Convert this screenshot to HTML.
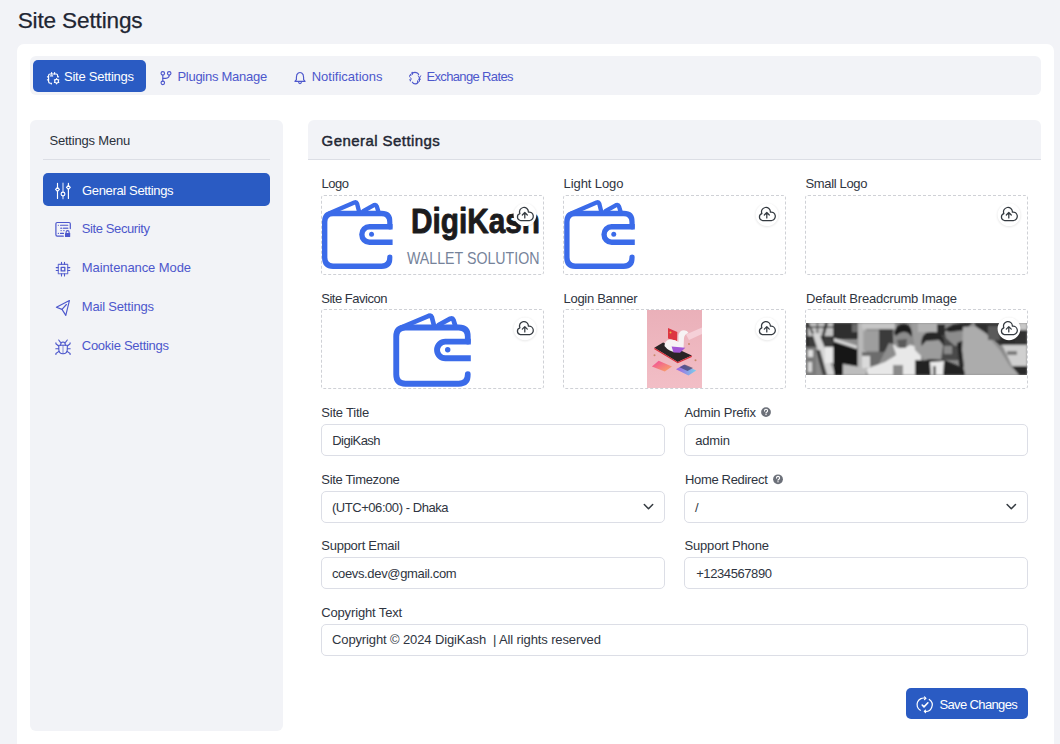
<!DOCTYPE html><html><head><meta charset="utf-8"><title>Site Settings</title><style>
*{margin:0;padding:0;box-sizing:border-box}
html,body{width:1060px;height:744px;overflow:hidden;background:#f2f3f7;font-family:"Liberation Sans",sans-serif}
.a{position:absolute}
.t{position:absolute;white-space:pre;line-height:1}
.box{position:absolute;border:1px dashed #cfd1d6;border-radius:3px;background:#fff}
.inp{position:absolute;border:1px solid #dcdee6;border-radius:5px;background:#fff}
.up{position:absolute;width:22px;height:22px;border-radius:50%;background:#fff;box-shadow:0 1px 3px rgba(0,0,0,.10)}
svg{position:absolute;overflow:visible}
</style></head><body>
<div class="t" style="left:17.70px;top:9.86px;font-size:22.6px;letter-spacing:-0.156px;color:#1f2633;-webkit-text-stroke:0.25px #1f2633;">Site Settings</div>
<div class="a" style="left:17px;top:44px;width:1037px;height:760px;background:#fff;border-radius:7px"></div>
<div class="a" style="left:30px;top:56px;width:1011px;height:39px;background:#f2f3f7;border-radius:6px"></div>
<div class="a" style="left:33px;top:60px;width:113px;height:32px;background:#2a5bc3;border-radius:5px"></div>
<div class="t" style="left:64.00px;top:69.99px;font-size:13px;letter-spacing:-0.248px;color:#ffffff;">Site Settings</div>
<div class="t" style="left:177.40px;top:69.99px;font-size:13px;letter-spacing:-0.263px;color:#4d57cc;">Plugins Manage</div>
<div class="t" style="left:311.70px;top:69.99px;font-size:13px;letter-spacing:0.007px;color:#4d57cc;">Notifications</div>
<div class="t" style="left:426.40px;top:69.99px;font-size:13px;letter-spacing:-0.638px;color:#4d57cc;">Exchange Rates</div>
<div class="a" style="left:30px;top:120px;width:253px;height:611px;background:#f2f3f7;border-radius:6px"></div>
<div class="t" style="left:49.40px;top:133.99px;font-size:13px;letter-spacing:-0.184px;color:#2b313c;">Settings Menu</div>
<div class="a" style="left:43px;top:159px;width:227px;height:1px;background:#dcdee5"></div>
<div class="a" style="left:43px;top:173px;width:227px;height:33px;background:#2a5bc3;border-radius:5px"></div>
<div class="t" style="left:82.00px;top:183.99px;font-size:13px;letter-spacing:-0.349px;color:#ffffff;">General Settings</div>
<div class="t" style="left:81.80px;top:221.99px;font-size:13px;letter-spacing:-0.397px;color:#4d57cc;">Site Security</div>
<div class="t" style="left:81.80px;top:260.99px;font-size:13px;letter-spacing:-0.091px;color:#4d57cc;">Maintenance Mode</div>
<div class="t" style="left:81.80px;top:299.99px;font-size:13px;letter-spacing:-0.185px;color:#4d57cc;">Mail Settings</div>
<div class="t" style="left:81.80px;top:338.99px;font-size:13px;letter-spacing:-0.275px;color:#4d57cc;">Cookie Settings</div>
<div class="a" style="left:308px;top:120px;width:733px;height:40px;background:#f2f3f7;border-radius:6px 6px 0 0;border-bottom:1px solid #dcdee5"></div>
<div class="t" style="left:321.60px;top:133.29px;font-size:15px;letter-spacing:0.431px;color:#1f2633;-webkit-text-stroke:0.45px #1f2633;">General Settings</div>
<div class="box" style="left:321px;top:195px;width:223px;height:80px"></div>
<div class="box" style="left:321px;top:309px;width:223px;height:80px"></div>
<div class="box" style="left:563px;top:195px;width:223px;height:80px"></div>
<div class="box" style="left:563px;top:309px;width:223px;height:80px"></div>
<div class="box" style="left:805px;top:195px;width:223px;height:80px"></div>
<div class="box" style="left:805px;top:309px;width:223px;height:80px"></div>
<div class="t" style="left:321.60px;top:176.99px;font-size:13px;letter-spacing:-0.508px;color:#2f3541;">Logo</div>
<div class="t" style="left:563.60px;top:176.99px;font-size:13px;letter-spacing:-0.103px;color:#2f3541;">Light Logo</div>
<div class="t" style="left:805.50px;top:176.99px;font-size:13px;letter-spacing:-0.349px;color:#2f3541;">Small Logo</div>
<div class="t" style="left:321.30px;top:291.99px;font-size:13px;letter-spacing:-0.493px;color:#2f3541;">Site Favicon</div>
<div class="t" style="left:563.60px;top:291.99px;font-size:13px;letter-spacing:-0.312px;color:#2f3541;">Login Banner</div>
<div class="t" style="left:806.10px;top:291.99px;font-size:13px;letter-spacing:-0.198px;color:#2f3541;">Default Breadcrumb Image</div>
<div class="inp" style="left:321px;top:424px;width:344px;height:32px"></div>
<div class="inp" style="left:684px;top:424px;width:344px;height:32px"></div>
<div class="inp" style="left:321px;top:491px;width:344px;height:32px"></div>
<div class="inp" style="left:684px;top:491px;width:344px;height:32px"></div>
<div class="inp" style="left:321px;top:557px;width:344px;height:32px"></div>
<div class="inp" style="left:684px;top:557px;width:344px;height:32px"></div>
<div class="inp" style="left:321px;top:624px;width:707px;height:32px"></div>
<div class="t" style="left:321.30px;top:405.99px;font-size:13px;letter-spacing:-0.217px;color:#2f3541;">Site Title</div>
<div class="t" style="left:332.20px;top:433.99px;font-size:13px;letter-spacing:-0.518px;color:#2f3541;">DigiKash</div>
<div class="t" style="left:684.60px;top:405.99px;font-size:13px;letter-spacing:-0.218px;color:#2f3541;">Admin Prefix</div>
<div class="t" style="left:695.20px;top:433.99px;font-size:13px;letter-spacing:-0.178px;color:#2f3541;">admin</div>
<div class="t" style="left:321.30px;top:472.99px;font-size:13px;letter-spacing:-0.322px;color:#2f3541;">Site Timezone</div>
<div class="t" style="left:331.90px;top:500.99px;font-size:13px;letter-spacing:-0.441px;color:#2f3541;">(UTC+06:00) - Dhaka</div>
<div class="t" style="left:684.90px;top:472.99px;font-size:13px;letter-spacing:-0.316px;color:#2f3541;">Home Redirect</div>
<div class="t" style="left:694.90px;top:500.99px;font-size:13px;letter-spacing:0.000px;color:#2f3541;">/</div>
<div class="t" style="left:321.30px;top:538.99px;font-size:13px;letter-spacing:-0.263px;color:#2f3541;">Support Email</div>
<div class="t" style="left:331.90px;top:566.99px;font-size:13px;letter-spacing:-0.348px;color:#2f3541;">coevs.dev@gmail.com</div>
<div class="t" style="left:684.60px;top:538.99px;font-size:13px;letter-spacing:-0.203px;color:#2f3541;">Support Phone</div>
<div class="t" style="left:696.20px;top:566.99px;font-size:13px;letter-spacing:-0.410px;color:#2f3541;">+1234567890</div>
<div class="t" style="left:321.20px;top:605.99px;font-size:13px;letter-spacing:-0.143px;color:#2f3541;">Copyright Text</div>
<div class="t" style="left:332.00px;top:632.99px;font-size:13px;letter-spacing:-0.120px;color:#2f3541;">Copyright © 2024 DigiKash  | All rights reserved</div>
<div class="a" style="left:906px;top:688px;width:122px;height:31px;background:#2a5bc3;border-radius:5px"></div>
<div class="t" style="left:939.40px;top:697.99px;font-size:13px;letter-spacing:-0.625px;color:#ffffff;">Save Changes</div>
<svg class="a" style="left:0;top:0" width="1060" height="744" viewBox="0 0 1060 744" fill="none" stroke-linecap="round" stroke-linejoin="round">
<g stroke="#ffffff" stroke-width="1.15">
<path d="M51.3,83.2 H50.2 Q48.6,83.2 48.6,81.6 V75.6 Q48.6,74 50.2,74 H56.1 Q57.6,74 57.6,75.6 V76.8 H58.6"/>
<path d="M51.6,74 V72.6 M54.6,74 V72.6 M48.6,76.8 H47.4 M48.6,79.8 H47.4 M51.3,83.2 V84"/>
<path d="M50.6,75.9 H52.6" stroke-width="1.3"/>
<circle cx="56.6" cy="81.2" r="1.9"/>
<path d="M56.6,78.6 V79.1 M56.6,83.3 V83.8 M54.4,79.9 L54.8,80.2 M58.8,79.9 L58.4,80.2 M54.4,82.5 L54.8,82.2 M58.8,82.5 L58.4,82.2"/>
</g>
<g stroke="#4d57cc" stroke-width="1.15">
<circle cx="162.8" cy="73.3" r="1.75"/><circle cx="169.2" cy="73.3" r="1.75"/><circle cx="162.8" cy="82.8" r="1.75"/>
<path d="M162.8,75.1 V81"/><path d="M169.2,75.1 C169.2,77.6 168,78.3 165.8,78.3 H162.9"/>
</g>
<g stroke="#4d57cc" stroke-width="1.15">
<path d="M294.9,81.3 L296.4,79.7 V77.2 Q296.4,74.2 298.3,73 Q300,72 301.7,73 Q303.6,74.2 303.6,77.2 V79.7 L305.1,81.3 Z"/>
<path d="M298.6,82.7 Q300,84.5 301.4,82.7"/>
</g>
<g stroke="#4d57cc" stroke-width="1.2">
<path d="M412.3,73.2 Q414.8,71.8 417.3,73 Q418.2,73.6 418.6,74.4"/>
<path d="M412.4,82.2 Q413.3,83.8 415.2,83.9 Q416.8,84 417.8,82.6"/>
<path d="M412.2,72.6 V74.3 M417.8,82.5 V81" stroke-width="1.5"/>
<path d="M411.2,75.7 Q410.8,75 410.1,75.1 Q409.3,75.3 409.5,76.4 Q409.8,77.4 410.6,77.9 Q411.4,78.5 411.1,79.6 Q410.6,80.4 409.6,79.9 M410.4,74.3 V75 M410.4,80.2 V81" stroke-width="1"/>
<path d="M418.3,75.8 L419.5,78 L420.7,75.8 M419.5,78 V81.3 M418.4,79.2 H420.6" stroke-width="1"/>
</g>
<g stroke="#ffffff" stroke-width="1.15">
<path d="M57.5,183.3 V187.4 M57.5,191.2 V198.5"/>
<path d="M68.4,183.3 V185.4 M68.4,189.2 V198.5"/>
<path d="M63,183.3 V192 M63,196 V198.5" stroke-width="1.7" stroke-opacity="0.55"/>
<path d="M57.5,187.3 L59.4,189.3 L57.5,191.3 L55.6,189.3 Z"/>
<path d="M68.4,185.3 L70.3,187.3 L68.4,189.3 L66.5,187.3 Z"/>
<circle cx="63" cy="194" r="1.9"/>
</g>
<g stroke="#4d57cc" stroke-width="1.2">
<path d="M70.3,228.6 V223.8 Q70.3,222.5 69,222.5 H57.2 Q55.9,222.5 55.9,223.8 V234.8 Q55.9,236.2 57.2,236.2 H63.3"/>
<path d="M58.3,225.3 H58.4 M60.5,225.3 H67.8 M58.3,233.4 H58.4 M60.5,233.4 H63.5" stroke-width="1.1"/>
<path d="M60.8,228.2 H61.6 M63.4,228.2 H67.8" stroke-width="1.4" stroke-opacity="0.8"/>
<path d="M60.8,230.6 H61.6 M63.4,230.6 H64.4" stroke-width="1" stroke-opacity="0.7"/>
</g>
<rect x="65" y="233" width="5.2" height="4" rx="0.6" fill="#4d57cc"/>
<path d="M66.1,233.2 V232.2 Q66.1,230.6 67.6,230.6 Q69.1,230.6 69.1,232.2 V233.2" stroke="#4d57cc" stroke-width="1.1"/>
<g stroke="#4d57cc" stroke-width="1.1">
<rect x="58.3" y="264.4" width="9.4" height="9.4" stroke-opacity="0.85"/>
<rect x="61.2" y="267.3" width="3.6" height="3.6" stroke-width="1.3"/>
<path d="M61.5,262.2 V264.3 M64.5,262.2 V264.3 M61.5,273.9 V276 M64.5,273.9 V276 M56.2,267.6 H58.2 M56.2,270.5 H58.2 M67.8,267.6 H69.8 M67.8,270.5 H69.8"/>
</g>
<g stroke="#4d57cc" stroke-width="1.15">
<path d="M69.4,300.6 L56.4,307.2 L62,309.4 L65.8,315.4 Z"/>
<path d="M62,309.4 L66.4,304.5"/>
</g>
<g stroke="#4d57cc" stroke-width="1.1">
<path d="M58.8,345.3 H67.3 V349.2 Q67.3,353.8 63,353.8 Q58.8,353.8 58.8,349.2 Z"/>
<path d="M60.6,345.2 Q60.6,342 63,342 Q65.4,342 65.4,345.2"/>
<path d="M63,345.5 V353.5" stroke-opacity="0.5" stroke-width="1.3"/>
<path d="M60.5,342.3 L58.7,340 M65.5,342.3 L67.3,340"/>
<path d="M58.6,346 L55.9,343.8 V342.8 M67.4,346 L70.1,343.8 V342.8"/>
<path d="M58.6,348.7 H55.8 M67.4,348.7 H70.2"/>
<path d="M58.9,351.4 L55.9,353.5 V354.5 M67.1,351.4 L70.1,353.5 V354.5"/>
</g>
<circle cx="766" cy="412.1" r="4.9" fill="#6c7079"/><path d="M764.5,410.90000000000003 Q764.5,409.20000000000005 766,409.20000000000005 Q767.6,409.20000000000005 767.6,410.70000000000005 Q767.6,411.70000000000005 766.5,412.20000000000005 Q766,412.5 766,413.1" stroke="#fff" stroke-width="1.1"/><rect x="765.4" y="414.0" width="1.2" height="1.1" fill="#fff"/>
<circle cx="778" cy="479.3" r="4.9" fill="#6c7079"/><path d="M776.5,478.1 Q776.5,476.40000000000003 778,476.40000000000003 Q779.6,476.40000000000003 779.6,477.90000000000003 Q779.6,478.90000000000003 778.5,479.40000000000003 Q778,479.7 778,480.3" stroke="#fff" stroke-width="1.1"/><rect x="777.4" y="481.2" width="1.2" height="1.1" fill="#fff"/>
<path d="M644.3,504.5 L648.5,508.8 L652.6999999999999,504.5" stroke="#343a40" stroke-width="1.5"/>
<path d="M1007.1,504.5 L1011.3000000000001,508.8 L1015.5,504.5" stroke="#343a40" stroke-width="1.5"/>
<g stroke="#ffffff" stroke-width="1.2">
<path d="M920.3,710.3 A6.6,6.6 0 0 1 925.6,698.3"/>
<path d="M924.5,696.9 L925.9,698.3 L924.5,699.6"/>
<path d="M929.3,699.4 A6.6,6.6 0 0 1 924.7,711.4"/>
<path d="M925.6,710.1 L924.3,711.4 L925.6,712.7"/>
<path d="M922.2,705 L924,706.9 L927.9,702.8" stroke-width="1.6"/>
</g>
<defs>
<clipPath id="wc"><rect x="380" y="300" width="90.8" height="100"/></clipPath>
<clipPath id="lb"><rect x="647" y="310" width="55" height="78"/></clipPath>
<clipPath id="bc"><rect x="806" y="323" width="221" height="52"/></clipPath>
<linearGradient id="pk" x1="0" y1="0" x2="0" y2="1"><stop offset="0" stop-color="#eab0b9"/><stop offset="1" stop-color="#f2bec6"/></linearGradient>
<linearGradient id="c1" x1="0" y1="0" x2="1" y2="1"><stop offset="0" stop-color="#f04a9c"/><stop offset="1" stop-color="#f9ac62"/></linearGradient>
<linearGradient id="c2" x1="0" y1="0" x2="1" y2="0"><stop offset="0" stop-color="#a060e0"/><stop offset="1" stop-color="#7ad0ec"/></linearGradient>
<filter id="bl" x="-20%" y="-20%" width="140%" height="140%"><feGaussianBlur stdDeviation="0.8"/></filter>
<filter id="sh" x="-50%" y="-50%" width="200%" height="200%"><feGaussianBlur stdDeviation="1.2"/></filter>
<g id="wal" clip-path="url(#wc)" stroke="#3b6be9" stroke-width="5.9" fill="none" stroke-linecap="round" stroke-linejoin="round">
<path d="M467.85,341.6 V336.6 Q467.85,327.45 458.7,327.45 H405.4 Q396.25,327.45 396.25,336.6 V374.6 Q396.25,383.75 405.4,383.75 H458.7 Q467.85,383.75 467.85,374.6 V374.2"/>
<path d="M474,341.65 H445.35 A8.3,8.3 0 0 0 445.35,358.25 H474" stroke-linecap="butt"/>
<path d="M401.5,327.3 L428.8,315.8 Q431,315 431.8,317 L434,325.5" stroke-width="4.7"/>
<path d="M438.5,325 L450.3,318.6 Q452.6,317.8 453.4,319.8 L455.5,326.5" stroke-width="4.7"/>
<circle cx="447.7" cy="349.7" r="2.7" fill="#3b6be9" stroke="none"/>
</g>
</defs>
<use href="#wal"/>
<use href="#wal" transform="translate(-36.3,-93.4) scale(0.911,0.937)"/>
<use href="#wal" transform="translate(205.9,-93.4) scale(0.911,0.937)"/>
<text x="411" y="232.5" font-family="Liberation Sans" font-weight="700" font-size="35.5" fill="#1b1b1d" stroke="#1b1b1d" stroke-width="0.9" textLength="129"  lengthAdjust="spacingAndGlyphs">DigiKash</text>
<text x="407" y="263.6" font-family="Liberation Sans" font-size="16.2" fill="#76839a" textLength="132.5" lengthAdjust="spacingAndGlyphs">WALLET SOLUTION</text>
<g clip-path="url(#lb)">
<rect x="647" y="310" width="55" height="78" fill="url(#pk)"/>
<path d="M686,334.5 L703,327 L703,333.5 L689,340 Z" fill="#f5d0d8"/>
<path d="M668,328 L677.3,332.1 L677,341 L668,338.5 Z" fill="#dd3541"/>
<circle cx="670.5" cy="332.5" r="1" fill="#e8b040"/>
<path d="M654.3,347.8 L663.1,342.6 L691.8,355.5 L677.7,361.9 Z" fill="#2a2426"/>
<path d="M654.3,347.8 L654.4,349.2 L677.7,363.3 L691.8,356.9 L691.8,355.5 L677.7,361.9 Z" fill="#d9303b"/>
<path d="M664.5,346 Q664.5,340.5 669.5,339.5 Q675,339 678.5,342 L678.5,335 Q679.5,330.5 684,330.3 Q687.5,330.5 688.5,333 Q684.5,334 684,338 L683.5,348.5 L676.5,352 Q669,352 664.5,346 Z" fill="#f6f3f4"/>
<path d="M671.6,346.6 L685.3,347.8 L680,352.8 L673.5,352.5 Z" fill="#a257d6"/>
<path d="M651.9,366.4 L658.7,360.7 L672,366.4 L664.8,371.6 Z" fill="url(#c1)"/>
<path d="M676,369.2 L683.7,364.8 L696.2,370.4 L688.5,375.6 Z" fill="url(#c2)"/>
<path d="M679.5,367.2 L684.8,364.5 L693,368 L687.5,371 Z" fill="#3a3560" opacity="0.65"/>
<circle cx="654.5" cy="355.3" r="1" fill="#c98a6a"/><circle cx="689" cy="344" r="1" fill="#c98a6a"/><circle cx="695.5" cy="360.3" r="1" fill="#c98a6a"/>
</g>
<g clip-path="url(#bc)">
<rect x="806" y="323" width="221" height="52" fill="#8a8a8a"/>
<g filter="url(#bl)">
<rect x="806" y="323" width="30" height="13" fill="#c4c4c4"/>
<rect x="806" y="326.5" width="30" height="1.5" fill="#3a3a3a"/>
<rect x="806" y="336" width="28" height="11" fill="#3a3a3a"/>
<rect x="806" y="323" width="1.8" height="52" fill="#1a1a1a"/>
<path d="M807,323 L809,323 L815,336 L813,336 Z" fill="#2a2a2a"/>
<rect x="816.8" y="323" width="1.3" height="14" fill="#2a2a2a"/>
<path d="M825,323 L828,323 L823,341 L820.5,341 Z" fill="#2a2a2a"/>
<rect x="833" y="323" width="30" height="16" fill="#2e2e2e"/>
<rect x="852" y="324" width="10" height="8" fill="#6a6a6a"/>
<rect x="858" y="323" width="8" height="52" fill="#b8b8b8"/>
<path d="M806,347 L816,347 L816,375 L806,375 Z" fill="#7a7a7a"/>
<rect x="808" y="350" width="5" height="7" fill="#e0e0e0"/>
<rect x="808" y="362" width="4" height="10" fill="#d8d8d8"/>
<path d="M812.5,333.5 L819,333 L834,372 L834,375 L826,375 Z" fill="#d6d6d6"/>
<path d="M816,350 L820,350 L827,375 L823,375 Z" fill="#3c3c3c"/>
<rect x="825" y="347" width="8" height="16" fill="#e8e8e8"/>
<path d="M833.5,338 L857.5,346 L857.5,375 L834,375 Z" fill="#151515"/>
<path d="M834,338 L857,345.5 L857,349 L834,341.5 Z" fill="#d8d8d8"/>
<path d="M843,364 L866,368 L866,375 L843,375 Z" fill="#bdbdbd"/>
<rect x="862" y="323" width="33" height="6" fill="#c6c6c6"/>
<rect x="863.4" y="330.7" width="15.4" height="20.3" fill="#9e9e9e"/>
<rect x="879" y="329" width="14" height="23" fill="#3a3a3a"/>
<rect x="862" y="352" width="25" height="14" fill="#6c6c6c"/>
<rect x="862" y="356" width="8" height="12" fill="#dadada"/>
<path d="M878,366 L889,343 L896,345 L885,368 Z" fill="#8e8e8e"/>
<path d="M893,345 L908,344 L921,348 L921,375 L868,375 L866,369 L885,362 L896,355 Z" fill="#e8e8e8"/>
<path d="M893,332 Q896,325 904,326 Q912,328 911,336 L910,345 Q903,350 896,347 Z" fill="#8c8c8c"/>
<path d="M894,333 Q897,323 905,324 Q913,326 912,337 L908,333 Q902,330 896,336 Z" fill="#1f1f1f"/>
<path d="M897,340 L907,339 L906,348 L899,348 Z" fill="#5a5a5a"/>
<rect x="893" y="365" width="10" height="10" fill="#8a8a8a"/>
<path d="M911,323 L925,323 L925,360 L915,350 Z" fill="#9c9c9c"/>
<rect x="915" y="360" width="7" height="15" fill="#2a2a2a"/>
<rect x="918" y="323" width="27" height="9" fill="#b2b2b2"/>
<rect x="937" y="324" width="8" height="11" fill="#2a2a2a"/>
<rect x="938" y="335" width="25" height="25" fill="#4a4a4a"/>
<rect x="944" y="346" width="8" height="8" fill="#8a8a8a"/>
<path d="M922,345 Q921,337 932,336 Q943,337 943,346 L941,360 Q933,366 925,360 Z" fill="#9c9c9c"/>
<path d="M921.5,346 Q920,331 933,332 Q945,332 944,346 L939,340 L926,341 Z" fill="#262626"/>
<path d="M916,375 L917,362 L930,359 L944,360 L963,368 L966,375 Z" fill="#232323"/>
<path d="M930,362 L944,361 L943,375 L931,375 Z" fill="#ececec"/>
<rect x="933.5" y="366" width="2" height="9" fill="#111"/>
<path d="M945,326 Q956,323 966,328 L966,342 L955,346 L946,338 Z" fill="#8c8c8c"/>
<path d="M944,330 Q951,322 972,323 L966,330 L950,332 Z" fill="#222"/>
<path d="M957,343 L964,340 L966,365 L960,370 Z" fill="#222"/>
<path d="M963,327 L975,326 L986,334 L1000,350 L1010,366 L1019,375 L965,375 L962,350 Z" fill="#acacac"/>
<path d="M975,323 L1017,323 L1017,345 L1000,345 L986,333 L975,326 Z" fill="#2e2e2e"/>
<rect x="988" y="326" width="12" height="14" fill="#5a5a5a"/>
<rect x="1017" y="323" width="10" height="7" fill="#c8c8c8"/>
<rect x="1015" y="330" width="12" height="20" fill="#333"/>
<path d="M1002,345 L1027,345 L1027,366 L1012,366 Z" fill="#d0d0d0"/>
<rect x="1007" y="351" width="10" height="4" fill="#7a7a7a"/>
<path d="M1012,366 L1027,366 L1027,375 L1019,375 Z" fill="#2a2a2a"/>
</g>
</g>
<circle cx="525" cy="215.29999999999998" r="11.6" fill="#000" opacity="0.10" filter="url(#sh)"/><circle cx="525" cy="214.7" r="11.4" fill="#fff"/><g transform="translate(524.8,214.7)" stroke="#343a40" stroke-width="1.25"><path d="M-4.4,5.8 A3.5,3.5 0 0 1 -4.9,-1.0 A4.45,4.45 0 1 1 3.6,-2.6 A4.2,4.2 0 0 1 4.9,5.8 Z"/><path d="M0,3.2 V-2.1 M-2.5,0.3 L0,-2.2 L2.5,0.3"/></g>
<circle cx="525" cy="329.40000000000003" r="11.6" fill="#000" opacity="0.10" filter="url(#sh)"/><circle cx="525" cy="328.8" r="11.4" fill="#fff"/><g transform="translate(524.8,328.8)" stroke="#343a40" stroke-width="1.25"><path d="M-4.4,5.8 A3.5,3.5 0 0 1 -4.9,-1.0 A4.45,4.45 0 1 1 3.6,-2.6 A4.2,4.2 0 0 1 4.9,5.8 Z"/><path d="M0,3.2 V-2.1 M-2.5,0.3 L0,-2.2 L2.5,0.3"/></g>
<circle cx="767" cy="215.29999999999998" r="11.6" fill="#000" opacity="0.10" filter="url(#sh)"/><circle cx="767" cy="214.7" r="11.4" fill="#fff"/><g transform="translate(766.8,214.7)" stroke="#343a40" stroke-width="1.25"><path d="M-4.4,5.8 A3.5,3.5 0 0 1 -4.9,-1.0 A4.45,4.45 0 1 1 3.6,-2.6 A4.2,4.2 0 0 1 4.9,5.8 Z"/><path d="M0,3.2 V-2.1 M-2.5,0.3 L0,-2.2 L2.5,0.3"/></g>
<circle cx="767" cy="329.40000000000003" r="11.6" fill="#000" opacity="0.10" filter="url(#sh)"/><circle cx="767" cy="328.8" r="11.4" fill="#fff"/><g transform="translate(766.8,328.8)" stroke="#343a40" stroke-width="1.25"><path d="M-4.4,5.8 A3.5,3.5 0 0 1 -4.9,-1.0 A4.45,4.45 0 1 1 3.6,-2.6 A4.2,4.2 0 0 1 4.9,5.8 Z"/><path d="M0,3.2 V-2.1 M-2.5,0.3 L0,-2.2 L2.5,0.3"/></g>
<circle cx="1009" cy="215.29999999999998" r="11.6" fill="#000" opacity="0.10" filter="url(#sh)"/><circle cx="1009" cy="214.7" r="11.4" fill="#fff"/><g transform="translate(1008.8,214.7)" stroke="#343a40" stroke-width="1.25"><path d="M-4.4,5.8 A3.5,3.5 0 0 1 -4.9,-1.0 A4.45,4.45 0 1 1 3.6,-2.6 A4.2,4.2 0 0 1 4.9,5.8 Z"/><path d="M0,3.2 V-2.1 M-2.5,0.3 L0,-2.2 L2.5,0.3"/></g>
<circle cx="1009" cy="329.40000000000003" r="11.6" fill="#000" opacity="0.10" filter="url(#sh)"/><circle cx="1009" cy="328.8" r="11.4" fill="#fff"/><g transform="translate(1008.8,328.8)" stroke="#343a40" stroke-width="1.25"><path d="M-4.4,5.8 A3.5,3.5 0 0 1 -4.9,-1.0 A4.45,4.45 0 1 1 3.6,-2.6 A4.2,4.2 0 0 1 4.9,5.8 Z"/><path d="M0,3.2 V-2.1 M-2.5,0.3 L0,-2.2 L2.5,0.3"/></g>
</svg>
</body></html>
